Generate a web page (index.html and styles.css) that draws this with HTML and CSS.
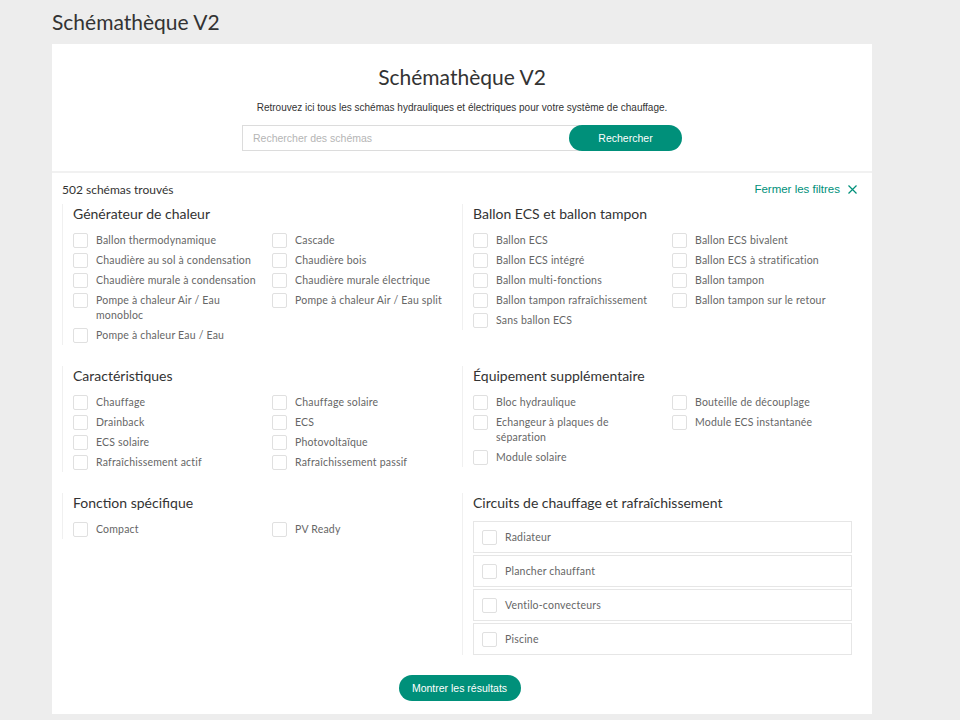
FILE: index.html
```html
<!DOCTYPE html>
<html lang="fr">

<head>
  <meta charset="UTF-8">
  <meta name="viewport" content="width=device-width, initial-scale=1.0">
  <title>Schémathèque V2</title>
  <link rel="stylesheet" href="styles.css">
</head>

<body>
  <h1 class="page-title">Schémathèque V2</h1>

  <div class="card">
    <div class="hero">
      <h2>Schémathèque V2</h2>
      <p>Retrouvez ici tous les schémas hydrauliques et électriques pour votre système de chauffage.</p>
      <form class="search" onsubmit="return false">
        <input type="text" placeholder="Rechercher des schémas">
        <button type="submit">Rechercher</button>
      </form>
    </div>

    <div class="filters">
      <div class="filters-bar">
        <span class="count">502 schémas trouvés</span>
        <a href="#" class="close-filters">Fermer les filtres
          <svg class="cross" width="9" height="9" viewBox="0 0 9 9"><path d="M0.5 0.5 L8.5 8.5 M8.5 0.5 L0.5 8.5" stroke="#00907a" stroke-width="1.2" fill="none"/></svg>
        </a>
      </div>

      <div class="groups">
        <div class="group">
          <h3>Générateur de chaleur</h3>
          <div class="options">
            <label class="option"><span class="box"></span>Ballon thermodynamique</label>
            <label class="option"><span class="box"></span>Cascade</label>
            <label class="option"><span class="box"></span>Chaudière au sol à condensation</label>
            <label class="option"><span class="box"></span>Chaudière bois</label>
            <label class="option"><span class="box"></span>Chaudière murale à condensation</label>
            <label class="option"><span class="box"></span>Chaudière murale électrique</label>
            <label class="option"><span class="box"></span>Pompe à chaleur Air / Eau monobloc</label>
            <label class="option"><span class="box"></span>Pompe à chaleur Air / Eau split</label>
            <label class="option"><span class="box"></span>Pompe à chaleur Eau / Eau</label>
          </div>
        </div>

        <div class="group">
          <h3>Ballon ECS et ballon tampon</h3>
          <div class="options">
            <label class="option"><span class="box"></span>Ballon ECS</label>
            <label class="option"><span class="box"></span>Ballon ECS bivalent</label>
            <label class="option"><span class="box"></span>Ballon ECS intégré</label>
            <label class="option"><span class="box"></span>Ballon ECS à stratification</label>
            <label class="option"><span class="box"></span>Ballon multi-fonctions</label>
            <label class="option"><span class="box"></span>Ballon tampon</label>
            <label class="option"><span class="box"></span>Ballon tampon rafraîchissement</label>
            <label class="option"><span class="box"></span>Ballon tampon sur le retour</label>
            <label class="option"><span class="box"></span>Sans ballon ECS</label>
          </div>
        </div>

        <div class="group">
          <h3>Caractéristiques</h3>
          <div class="options">
            <label class="option"><span class="box"></span>Chauffage</label>
            <label class="option"><span class="box"></span>Chauffage solaire</label>
            <label class="option"><span class="box"></span>Drainback</label>
            <label class="option"><span class="box"></span>ECS</label>
            <label class="option"><span class="box"></span>ECS solaire</label>
            <label class="option"><span class="box"></span>Photovoltaïque</label>
            <label class="option"><span class="box"></span>Rafraîchissement actif</label>
            <label class="option"><span class="box"></span>Rafraîchissement passif</label>
          </div>
        </div>

        <div class="group">
          <h3>Équipement supplémentaire</h3>
          <div class="options">
            <label class="option"><span class="box"></span>Bloc hydraulique</label>
            <label class="option"><span class="box"></span>Bouteille de découplage</label>
            <label class="option"><span class="box"></span>Echangeur à plaques de séparation</label>
            <label class="option"><span class="box"></span>Module ECS instantanée</label>
            <label class="option"><span class="box"></span>Module solaire</label>
          </div>
        </div>

        <div class="group">
          <h3>Fonction spécifique</h3>
          <div class="options">
            <label class="option"><span class="box"></span>Compact</label>
            <label class="option"><span class="box"></span>PV Ready</label>
          </div>
        </div>

        <div class="group">
          <h3>Circuits de chauffage et rafraîchissement</h3>
          <div class="circuits">
            <label class="option"><span class="box"></span>Radiateur</label>
            <label class="option"><span class="box"></span>Plancher chauffant</label>
            <label class="option"><span class="box"></span>Ventilo-convecteurs</label>
            <label class="option"><span class="box"></span>Piscine</label>
          </div>
        </div>
      </div>

      <div class="actions">
        <button class="show-results">Montrer les résultats</button>
      </div>
    </div>
  </div>
</body>

</html>
```

FILE: styles.css
```css
body {
  margin: 0;
  padding: 0 88px 0 52px;
  background-color: #ededed;
  font-family: Lato, "Noto Sans", sans-serif;
  color: #333;
}

.page-title {
  margin: 0;
  padding-top: 10px;
  height: 44px;
  box-sizing: border-box;
  font-size: 21px;
  font-weight: 400;
  line-height: 24px;
  color: #333;
}

.card {
  background-color: #fff;
  min-height: 670px;
}

.hero {
  text-align: center;
  padding: 21px 0 20px;
  border-bottom: 2px solid #f1f1f1;
}

.hero h2 {
  margin: 0;
  font-size: 21px;
  font-weight: 400;
  line-height: 24px;
}

.hero p {
  margin: 12px 0 10px;
  font-family: "Liberation Sans", Arial, sans-serif;
  font-size: 10px;
  line-height: 14px;
  color: #333;
}

.search {
  display: flex;
  justify-content: center;
  align-items: center;
}

.search input {
  width: 338px;
  height: 26px;
  box-sizing: border-box;
  border: 1px solid #dcdcdc;
  padding: 0 10px;
  font-family: "Liberation Sans", Arial, sans-serif;
  font-size: 10.5px;
  outline: none;
}

.search input::placeholder {
  color: #b5b5b5;
}

.search button,
.show-results {
  height: 26px;
  border: none;
  border-radius: 13px;
  background-color: #00907a;
  color: #fff;
  font-family: "Liberation Sans", Arial, sans-serif;
  font-size: 10.5px;
  cursor: pointer;
}

.search button {
  width: 113px;
  margin-left: -11px;
}

.filters {
  padding: 7px 15px 13px 10px;
}

.filters-bar {
  display: flex;
  justify-content: space-between;
  align-items: center;
  height: 18px;
}

.count {
  font-size: 12px;
  color: #333;
}

.close-filters {
  display: flex;
  align-items: center;
  font-family: "Liberation Sans", Arial, sans-serif;
  font-size: 11.5px;
  color: #00907a;
  text-decoration: none;
}

.cross {
  margin-left: 8px;
}

.groups {
  display: grid;
  grid-template-columns: 400px 395px;
  row-gap: 21px;
  margin-top: 6px;
}

.group {
  align-self: start;
  border-left: 1px solid #f0f0f0;
  padding-left: 10px;
}

.group h3 {
  margin: 0 0 6px;
  font-size: 14px;
  font-weight: 400;
  line-height: 20px;
  color: #333;
}

.options {
  display: grid;
  grid-template-columns: 199px 185px;
}

.option {
  display: flex;
  align-items: flex-start;
  padding: 2.5px 14px 2.5px 0;
  font-size: 10.5px;
  line-height: 15px;
  color: #666;
  letter-spacing: 0.2px;
}

.option:nth-child(even) {
  padding-right: 0;
}

.box {
  flex: none;
  width: 13px;
  height: 13px;
  border: 1px solid #e0e0e0;
  border-radius: 2px;
  margin-right: 8px;
}

.circuits {
  display: flex;
  flex-direction: column;
  gap: 2px;
  width: 379px;
  margin-top: 8px;
}

.circuits .option {
  align-items: center;
  height: 32px;
  box-sizing: border-box;
  border: 1px solid #e6e6e6;
  padding: 0 8px;
}

.actions {
  display: flex;
  justify-content: center;
  margin-top: 20px;
}

.show-results {
  width: 122px;
}
```
